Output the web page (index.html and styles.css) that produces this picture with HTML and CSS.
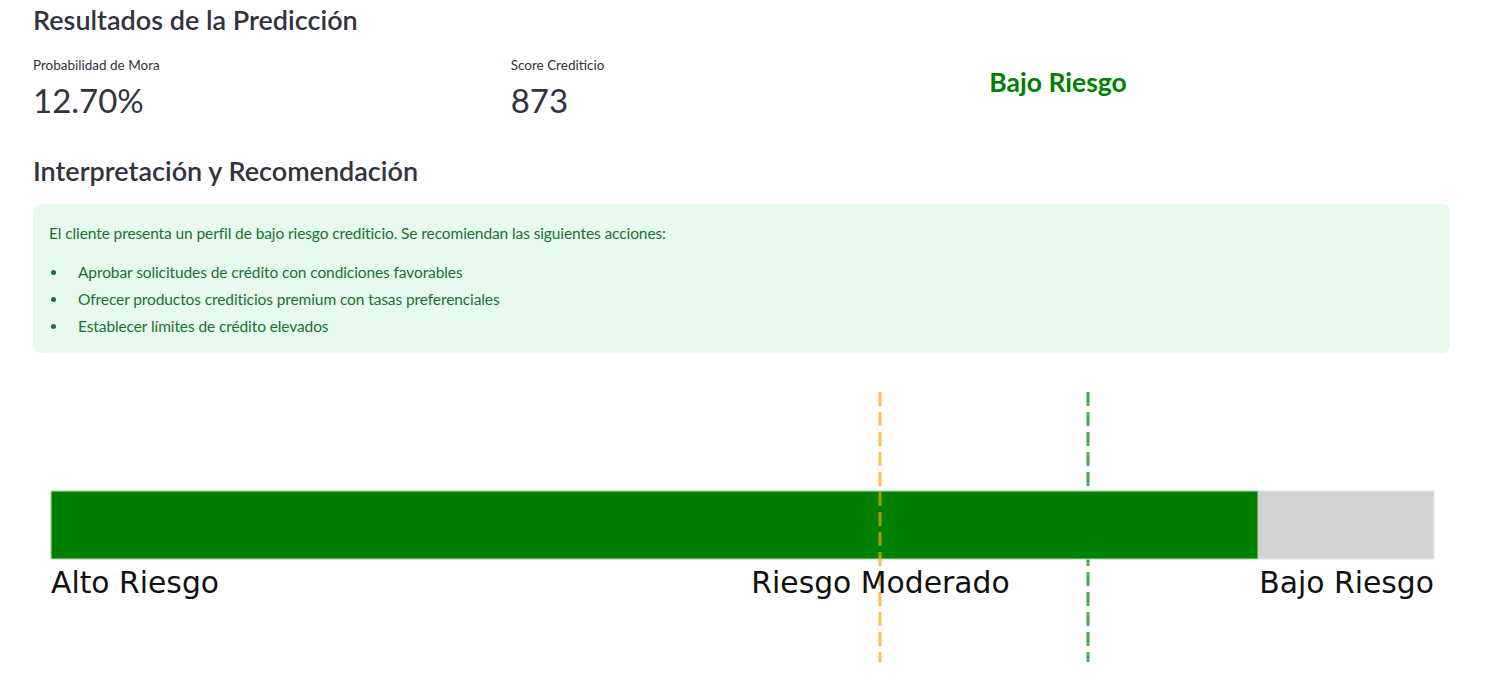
FILE: index.html
```html
<!DOCTYPE html>
<html lang="es">
<head>
<meta charset="utf-8">
<title>Resultados de la Predicción</title>
<link rel="stylesheet" href="styles.css">
</head>
<body>
<main class="main">
  <h3 class="heading title">Resultados de la Predicción</h3>
  <div class="metrics">
    <div class="metric">
      <div class="metric-label">Probabilidad de Mora</div>
      <div class="metric-value">12.70%</div>
    </div>
    <div class="metric">
      <div class="metric-label">Score Crediticio</div>
      <div class="metric-value">873</div>
    </div>
    <div class="metric metric-risk">
      <h3 class="heading risk">Bajo Riesgo</h3>
    </div>
  </div>
  <h3 class="heading subtitle">Interpretación y Recomendación</h3>
  <div class="alert">
    <p class="alert-text">El cliente presenta un perfil de bajo riesgo crediticio. Se recomiendan las siguientes acciones:</p>
    <ul class="alert-list">
      <li>Aprobar solicitudes de crédito con condiciones favorables</li>
      <li>Ofrecer productos crediticios premium con tasas preferenciales</li>
      <li>Establecer límites de crédito elevados</li>
    </ul>
  </div>
  <div class="chart">
    <svg class="chart-svg" width="1417" height="326" viewBox="0 0 1417 326" xmlns="http://www.w3.org/2000/svg">
      <line x1="1055" y1="22" x2="1055" y2="292" stroke="#4da64d" stroke-width="3" stroke-dasharray="14 6"/>
      <rect x="18" y="121" width="1383" height="68" fill="#d3d3d3" stroke="#e4e4e4" stroke-width="1"/>
      <rect x="18" y="121" width="1207" height="68" fill="#008000" stroke="#b9dcb9" stroke-width="1"/>
      <line x1="847" y1="22" x2="847" y2="292" stroke="#ffa500" stroke-opacity="0.7" stroke-width="3" stroke-dasharray="14 6"/>
      <text class="chart-label" x="18" y="223">Alto Riesgo</text>
      <text class="chart-label" x="847.5" y="223" text-anchor="middle">Riesgo Moderado</text>
      <text class="chart-label" x="1401" y="223" text-anchor="end">Bajo Riesgo</text>
    </svg>
  </div>
</main>
</body>
</html>
```

FILE: styles.css
```css
html, body {
  margin: 0;
  padding: 0;
  background: #ffffff;
  overflow: hidden;
}

body {
  font-family: "Lato", "Noto Sans", sans-serif;
  color: rgb(49, 51, 63);
}

.main {
  width: 1417px;
  padding: 3px 42px 0 33px;
}

.heading {
  margin: 0;
  font-size: 27px;
  font-weight: 600;
  line-height: 34px;
  color: rgb(49, 51, 63);
}

.metrics {
  display: grid;
  grid-template-columns: repeat(3, 1fr);
  column-gap: 16px;
  margin-top: 18px;
}

.metric-label {
  font-size: 13.5px;
  line-height: 20px;
}

.metric-value {
  margin-top: 3px;
  font-size: 33px;
  line-height: 44px;
}

.metric-risk {
  padding-top: 10px;
  padding-left: 1px;
}

.risk {
  color: #008000;
  font-size: 26.5px;
  font-weight: 700;
}

.subtitle {
  margin-top: 32px;
}

.alert {
  margin-top: 16px;
  padding: 16px 16px 13.5px;
  background: rgba(33, 195, 84, 0.1);
  border-radius: 8px;
  color: rgb(23, 114, 51);
  font-size: 15.5px;
  letter-spacing: -0.1px;
}

.alert-text {
  margin: 0 0 12.5px;
  line-height: 26px;
}

.alert-list {
  list-style: none;
  margin: 0;
  padding: 0;
}

.alert-list li {
  display: flex;
  align-items: flex-start;
  line-height: 27px;
}

.alert-list li::before {
  content: "";
  flex: none;
  width: 5px;
  height: 5px;
  margin: 11px 22px 0 2px;
  border-radius: 50%;
  background: rgb(23, 114, 51);
}

.chart {
  margin-top: 17px;
}

.chart-svg {
  display: block;
}

.chart-label {
  font-family: "DejaVu Sans", sans-serif;
  font-size: 29.8px;
  fill: #111111;
}
```
